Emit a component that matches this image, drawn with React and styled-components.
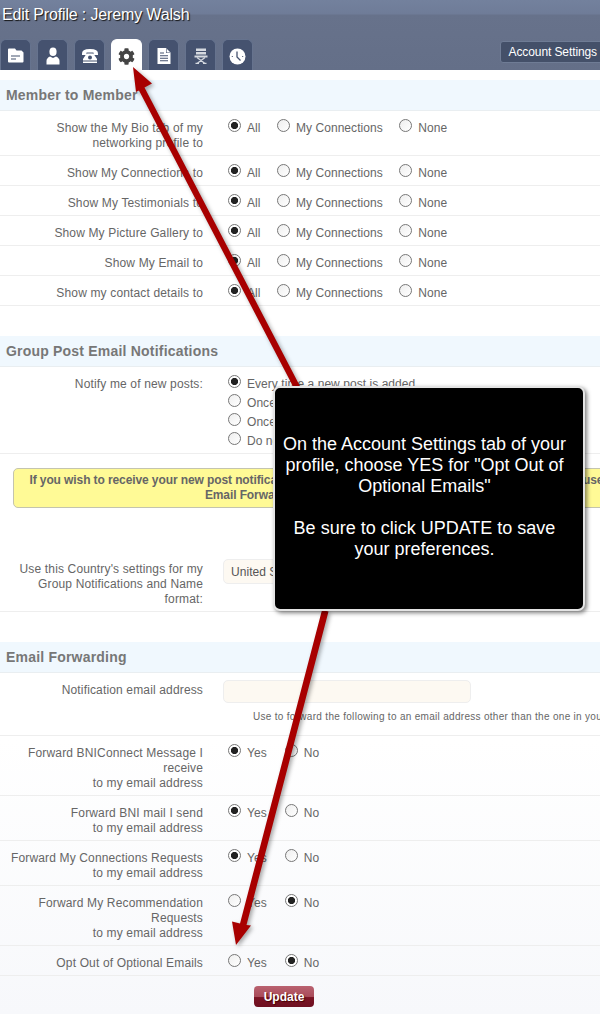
import React from 'react'
import styled, { createGlobalStyle } from 'styled-components'
import { FaCog } from 'react-icons/fa'

const visibility = [
  { label: 'Show the My Bio tab of my networking profile to' },
  { label: 'Show My Connections to' },
  { label: 'Show My Testimonials to' },
  { label: 'Show My Picture Gallery to' },
  { label: 'Show My Email to' },
  { label: 'Show my contact details to' },
]

const forwarding = [
  { label: <>Forward BNIConnect Message I receive<br />to my email address</>, yes: true },
  { label: <>Forward BNI mail I send<br />to my email address</>, yes: true },
  { label: <>Forward My Connections Requests<br />to my email address</>, yes: true },
  { label: <>Forward My Recommendation Requests<br />to my email address</>, yes: false },
  { label: 'Opt Out of Optional Emails', yes: false },
]

function Radio({ checked, children }) {
  return (
    <Option>
      <RadioInput type='radio' checked={!!checked} readOnly />
      {children}
    </Option>
  )
}

function App() {
  return (
    <Page>
      <GlobalStyle />
      <Header>
        <Title>Edit Profile : Jeremy Walsh</Title>
        <TabBar>
          <Tab>
            <svg width='18' height='18' viewBox='0 0 18 18'>
              <path fill='#fff' d='M1 2.500q0-1 1-1h6l1.500 2h5l2 2v9q0 1-1 1H2q-1 0-1-1z' />
              <path stroke='#45526f' strokeWidth='1.200' d='M4 9h9M4 12h5' />
            </svg>
          </Tab>
          <Tab>
            <svg width='16' height='18' viewBox='0 0 16 18'>
              <ellipse fill='#fff' cx='8' cy='4.800' rx='3.600' ry='4.300' />
              <path fill='#fff' d='M1.500 17.500v-3.500q0-3 3.500-4.500l3 1.500 3-1.500q3.500 1.500 3.500 4.500v3.500z' />
            </svg>
          </Tab>
          <Tab>
            <svg width='18' height='18' viewBox='0 0 18 18'>
              <path fill='#fff' d='M1 7q-.5-5 8-5t8 5v1h-4.500V5.500h-7V8H1z' />
              <path fill='#fff' d='M4 9q1-2.500 2.500-2.500h5Q13 6.500 14 9l2 3v4H2v-4z' />
              <circle cx='9' cy='10.500' r='2' fill='#45526f' />
              <path stroke='#45526f' d='M2 14h14' />
            </svg>
          </Tab>
          <Tab $active>
            <FaCog size={17} color='#444' />
          </Tab>
          <Tab>
            <svg width='16' height='18' viewBox='0 0 16 18'>
              <path fill='#fff' d='M1.500 1h8.500l4.500 4.500V17h-13z' />
              <path fill='#45526f' d='M10 1.500V6h4.500v-.6H10.600V1.500z' />
              <path stroke='#45526f' strokeWidth='1.100' d='M4 6h4M4 8.700h8M4 11.200h8M4 13.800h8' />
            </svg>
          </Tab>
          <Tab>
            <svg width='14' height='16' viewBox='0 0 14 16'>
              <path fill='#d5d9e0' d='M2 .5h10v2.500H2zM2 4h10v2.500H2z' />
              <path fill='#d5d9e0' d='M.5 7.500h13V9.500H.5z' />
              <path stroke='#d5d9e0' strokeWidth='1.300' fill='none' d='M3 9.500l8 6M11 9.500l-8 6M1.500 15.500h3.500M9 15.500h3.500' />
            </svg>
          </Tab>
          <Tab>
            <svg width='17' height='17' viewBox='0 0 17 17'>
              <circle cx='8.500' cy='8.500' r='8' fill='#fff' />
              <path stroke='#45526f' strokeWidth='1.300' fill='none' d='M8 3.500v5.500l3.500 3.500' />
              <path stroke='#45526f' strokeWidth='1' d='M2.800 8.500h1M13.200 8.500h1' />
            </svg>
          </Tab>
          <TabButton>Account Settings</TabButton>
        </TabBar>
      </Header>

      <Section>
        <SectionTitle>Member to Member</SectionTitle>
        {visibility.map(row => (
          <Row key={row.label}>
            <Label>{row.label}</Label>
            <Options $gap='16.500px'>
              <Radio checked>All</Radio>
              <Radio>My Connections</Radio>
              <Radio>None</Radio>
            </Options>
          </Row>
        ))}
      </Section>

      <Section>
        <SectionTitle>Group Post Email Notifications</SectionTitle>
        <Row>
          <Label>Notify me of new posts:</Label>
          <Options $stacked $gap='4px'>
            <Radio checked>Every time a new post is added</Radio>
            <Radio>Once a day</Radio>
            <Radio>Once a week</Radio>
            <Radio>Do not send</Radio>
          </Options>
        </Row>
        <Notice>
          If you wish to receive your new post notifications by email, please make sure that you are ready to use the new<br />
          Email Forwarding options in the sections below.
        </Notice>
        <Row>
          <Label>Use this Country's settings for my Group Notifications and Name format:</Label>
          <SelectBox>United States</SelectBox>
        </Row>
      </Section>

      <Section>
        <SectionTitle>Email Forwarding</SectionTitle>
        <Row $tall>
          <Label>Notification email address</Label>
          <Field>
            <TextInput type='text' readOnly />
            <Hint>Use to forward the following to an email address other than the one in your profile</Hint>
          </Field>
        </Row>
        {forwarding.map((row, i) => (
          <Row key={i}>
            <Label>{row.label}</Label>
            <Options $gap='18px'>
              <Radio checked={row.yes}>Yes</Radio>
              <Radio checked={!row.yes}>No</Radio>
            </Options>
          </Row>
        ))}
      </Section>

      <Actions>
        <UpdateButton>Update</UpdateButton>
      </Actions>

      <Arrows width='600' height='1014' viewBox='0 0 600 1014'>
        <path fill='#a80000' d='M133 67L152 83.500 144.500 87.500 303 392 297.500 395 139 90.500 136 92z' />
        <path fill='#a80000' d='M236 945L232 921.500 240 923.500 322 610 328.500 611.500 246.500 925 251 925.500z' />
      </Arrows>

      <Callout>
        On the Account Settings tab of your profile, choose YES for "Opt Out of Optional Emails"
        <br /><br />
        Be sure to click UPDATE to save your preferences.
      </Callout>
    </Page>
  )
}

const GlobalStyle = createGlobalStyle`
  html, body {
    margin: 0;
    padding: 0;
    overflow: hidden;
    background: #fff;
  }
`

const Page = styled.div`
  position: relative;
  width: 610px;
  height: 1014px;
  overflow: hidden;
  font-family: "Liberation Sans", Arial, sans-serif;
  font-size: 12px;
  line-height: 15px;
  letter-spacing: 0.05px;
  color: #666;
  background: linear-gradient(#fff 740px, #f7f8fb 1014px);
`

const Header = styled.header`
  height: 70px;
  margin-bottom: 10px;
  background: linear-gradient(#73819d 0, #6f7c98 14px, #67728b 15px, #646f88 70px);
`

const Title = styled.h1`
  margin: 0;
  padding-left: 2px;
  height: 28px;
  font-size: 16px;
  font-weight: normal;
  line-height: 29px;
  letter-spacing: -0.15px;
  color: #fff;
  text-shadow: 1px 1px 1px #111;
`

const TabBar = styled.nav`
  display: flex;
  gap: 6px;
  margin-top: 11px;
  height: 31px;
`

const Tab = styled.div`
  display: flex;
  align-items: center;
  justify-content: center;
  box-sizing: border-box;
  width: 31px;
  height: 31px;
  padding-top: 2px;
  border: 1px solid ${p => (p.$active ? '#fff' : '#66738e')};
  border-bottom: 0;
  border-radius: 6px 6px 0 0;
  background: ${p => (p.$active ? '#fff' : '#45526f')};
`

const TabButton = styled.div`
  margin: 2px 4px 0 auto;
  box-sizing: border-box;
  height: 22px;
  padding: 0 8px;
  border: 1px solid #6f7c95;
  border-radius: 3px;
  background: #445069;
  color: #fff;
  line-height: 20px;
  letter-spacing: -0.1px;
`

const Section = styled.section`
  margin-bottom: 30px;
`

const SectionTitle = styled.h2`
  margin: 0;
  height: 30px;
  padding-left: 6px;
  border-bottom: 1px solid #e9eef1;
  background: #f0f8fe;
  color: #777;
  font-size: 14px;
  line-height: 30px;
  letter-spacing: 0.2px;
`

const Row = styled.div`
  display: flex;
  align-items: flex-start;
  padding: 10px 0 4px;
  min-height: ${p => (p.$tall ? '48px' : '0')};
  border-bottom: 1px solid #eee;
`

const Label = styled.div`
  flex: none;
  box-sizing: border-box;
  width: 203px;
  padding-left: 5px;
  margin-right: 25px;
  text-align: right;
  letter-spacing: 0.15px;
`

const Options = styled.div`
  display: flex;
  flex-direction: ${p => (p.$stacked ? 'column' : 'row')};
  gap: ${p => p.$gap};
`

const Option = styled.label`
  display: flex;
  align-items: flex-start;
  white-space: nowrap;
`

const RadioInput = styled.input`
  appearance: none;
  flex: none;
  box-sizing: border-box;
  width: 13px;
  height: 13px;
  margin: -2px 6px 0 0;
  border: 1px solid #777;
  border-radius: 50%;
  background: ${p =>
    p.checked
      ? 'radial-gradient(circle, #222 3.2px, #fff 4px)'
      : 'linear-gradient(135deg, #eee, #fff)'};
`

const Notice = styled.div`
  box-sizing: border-box;
  width: 654px;
  margin: 14px 0 44px 13px;
  padding: 4px 0;
  border: 1px solid #c4c4ae;
  border-radius: 5px;
  background: #fffa96;
  color: #666;
  font-weight: bold;
  letter-spacing: -0.1px;
  text-align: center;
  white-space: nowrap;
`

const SelectBox = styled.div`
  box-sizing: border-box;
  width: 248px;
  height: 25px;
  margin: -3px 0 0 -5px;
  padding-left: 7px;
  border: 1px solid #eee;
  border-radius: 5px;
  background: #fdf9f2;
  color: #555;
  line-height: 24px;
`

const Field = styled.div`
  display: flex;
  flex-direction: column;
  margin-left: -5px;
`

const TextInput = styled.input`
  box-sizing: border-box;
  width: 248px;
  height: 23px;
  margin-top: -3px;
  border: 1px solid #eee;
  border-radius: 5px;
  background: #fdf9f2;
`

const Hint = styled.div`
  margin: 6px 0 0 30px;
  font-size: 10px;
  letter-spacing: 0.3px;
  white-space: nowrap;
`

const Actions = styled.div`
  display: flex;
  justify-content: center;
  width: 568px;
  margin-top: -20px;
`

const UpdateButton = styled.button`
  width: 60px;
  height: 21px;
  padding: 0;
  border: 0;
  border-radius: 4px;
  background: linear-gradient(#ba6270 0, #a94c5a 50%, #7a1424 55%, #6e0f20 100%);
  color: #fff;
  font-family: inherit;
  font-size: 12px;
  font-weight: bold;
  text-shadow: 1px 1px 1px #400;
`

const Arrows = styled.svg`
  position: absolute;
  top: 0;
  left: 0;
  filter: drop-shadow(2px 2px 2px rgba(0, 0, 0, 0.35));
`

const Callout = styled.div`
  position: absolute;
  top: 386px;
  left: 273px;
  box-sizing: border-box;
  width: 312px;
  height: 225px;
  padding: 46px 9px 0 0;
  border: 2px solid #e4e4e4;
  border-radius: 7px;
  background: #000;
  box-shadow: 2px 2px 4px rgba(0, 0, 0, 0.5);
  color: #fff;
  font-size: 18px;
  line-height: 21px;
  letter-spacing: 0;
  text-align: center;
`

export default App
